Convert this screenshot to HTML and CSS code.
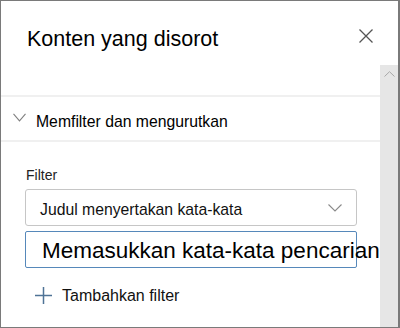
FILE: index.html
```html
<!DOCTYPE html>
<html lang="id">
<head>
<meta charset="utf-8">
<title>Konten yang disorot</title>
<link rel="stylesheet" href="styles.css">
</head>
<body>
<div class="panel">
  <div class="header">
    <h1 class="title">Konten yang disorot</h1>
    <button class="close" aria-label="Tutup">
      <svg width="14" height="14" viewBox="0 0 14 14"><path d="M0.5 0.5L13.5 13.5M13.5 0.5L0.5 13.5" stroke="#555" stroke-width="1.3" fill="none"/></svg>
    </button>
  </div>
  <div class="body">
    <div class="content">
      <div class="spacer"></div>
      <div class="section-head">
        <svg class="chev" width="13" height="9" viewBox="0 0 13 9"><path d="M0.5 0.8L6.5 7.8L12.5 0.8" stroke="#808080" stroke-width="1.1" fill="none"/></svg>
        <span class="section-title">Memfilter dan mengurutkan</span>
      </div>
      <div class="filters">
        <div class="label">Filter</div>
        <div class="dropdown">
          <span class="dd-text">Judul menyertakan kata-kata</span>
          <svg class="dd-chev" width="14" height="8" viewBox="0 0 14 8"><path d="M0.5 0.5L7 7L13.5 0.5" stroke="#8a8a8a" stroke-width="1.1" fill="none"/></svg>
        </div>
        <div class="input"><span class="input-text">Memasukkan kata-kata pencarian</span></div>
        <div class="add">
          <svg class="plus" width="17" height="17" viewBox="0 0 17 17"><path d="M8.5 0V17M0 8.5H17" stroke="#4f7396" stroke-width="1.5" fill="none"/></svg>
          <span class="add-text">Tambahkan filter</span>
        </div>
      </div>
    </div>
    <div class="scrollbar">
      <svg class="up" width="11" height="6" viewBox="0 0 11 6"><path d="M0.5 5.5L5.5 0.7L10.5 5.5" stroke="#a8a8a8" stroke-width="1" fill="none"/></svg>
    </div>
  </div>
</div>
</body>
</html>
```
FILE: styles.css
```css
* { box-sizing: border-box; }
html, body { margin: 0; padding: 0; background: #fff; }
body { font-family: "Liberation Sans", Arial, sans-serif; color: #111; }

.panel {
  width: 400px;
  height: 328px;
  border: 1px solid #7a7a7a;
  border-right-width: 2px;
  display: flex;
  flex-direction: column;
  overflow: hidden;
  background: #fff;
}

.header {
  height: 64px;
  flex: none;
  display: flex;
  align-items: flex-start;
  justify-content: space-between;
  padding: 23.5px 25px 0 26px;
}
.title {
  margin: 0;
  font-size: 21.5px;
  font-weight: normal;
  line-height: 28px;
  color: #000;
}
.close {
  border: 0;
  background: none;
  padding: 0;
  margin-top: 4.5px;
  width: 14px;
  height: 14px;
  display: block;
}
.close svg { display: block; }

.body {
  flex: 1;
  display: flex;
  min-height: 0;
}
.content {
  flex: 1;
  overflow: hidden;
  min-width: 0;
}
.scrollbar {
  width: 18px;
  flex: none;
  background: #e6e6e6;
  display: flex;
  justify-content: center;
  padding-top: 6px;
}
.up { display: block; margin-left: 1px; }

.spacer { height: 30px; }

.section-head {
  border-top: 2px solid #f0f0f0;
  border-bottom: 2px solid #f0f0f0;
  height: 47px;
  display: flex;
  align-items: flex-start;
  padding: 14.5px 0 0 12px;
}
.chev { display: block; margin-top: 1.5px; flex: none; }
.section-title {
  margin-left: 10px;
  font-size: 15.75px;
  line-height: 20px;
  color: #000;
}

.filters {
  padding: 24px 0 0 24px;
}
.label {
  font-size: 14px;
  line-height: 18px;
  padding-left: 1px;
  color: #222;
}
.dropdown {
  margin-top: 5px;
  width: 332px;
  height: 37px;
  border: 1px solid #c6c6c6;
  border-radius: 3px;
  display: flex;
  align-items: flex-start;
  justify-content: space-between;
  padding: 9.5px 14px 0 14px;
}
.dd-text {
  font-size: 15.75px;
  line-height: 20px;
  color: #111;
}
.dd-chev { display: block; margin-top: 4px; }

.input {
  margin-top: 5px;
  width: 332px;
  height: 37px;
  border: 1px solid #5688ba;
  border-radius: 2px;
  padding: 5.5px 0 0 16px;
  white-space: nowrap;
  overflow: visible;
}
.input-text {
  font-size: 22.5px;
  line-height: 26px;
  color: #000;
}

.add {
  margin-top: 17.5px;
  display: flex;
  align-items: center;
  height: 20px;
  padding-left: 10px;
}
.plus { display: block; flex: none; }
.add-text {
  margin-left: 10px;
  font-size: 16px;
  line-height: 20px;
  color: #111;
}
```
